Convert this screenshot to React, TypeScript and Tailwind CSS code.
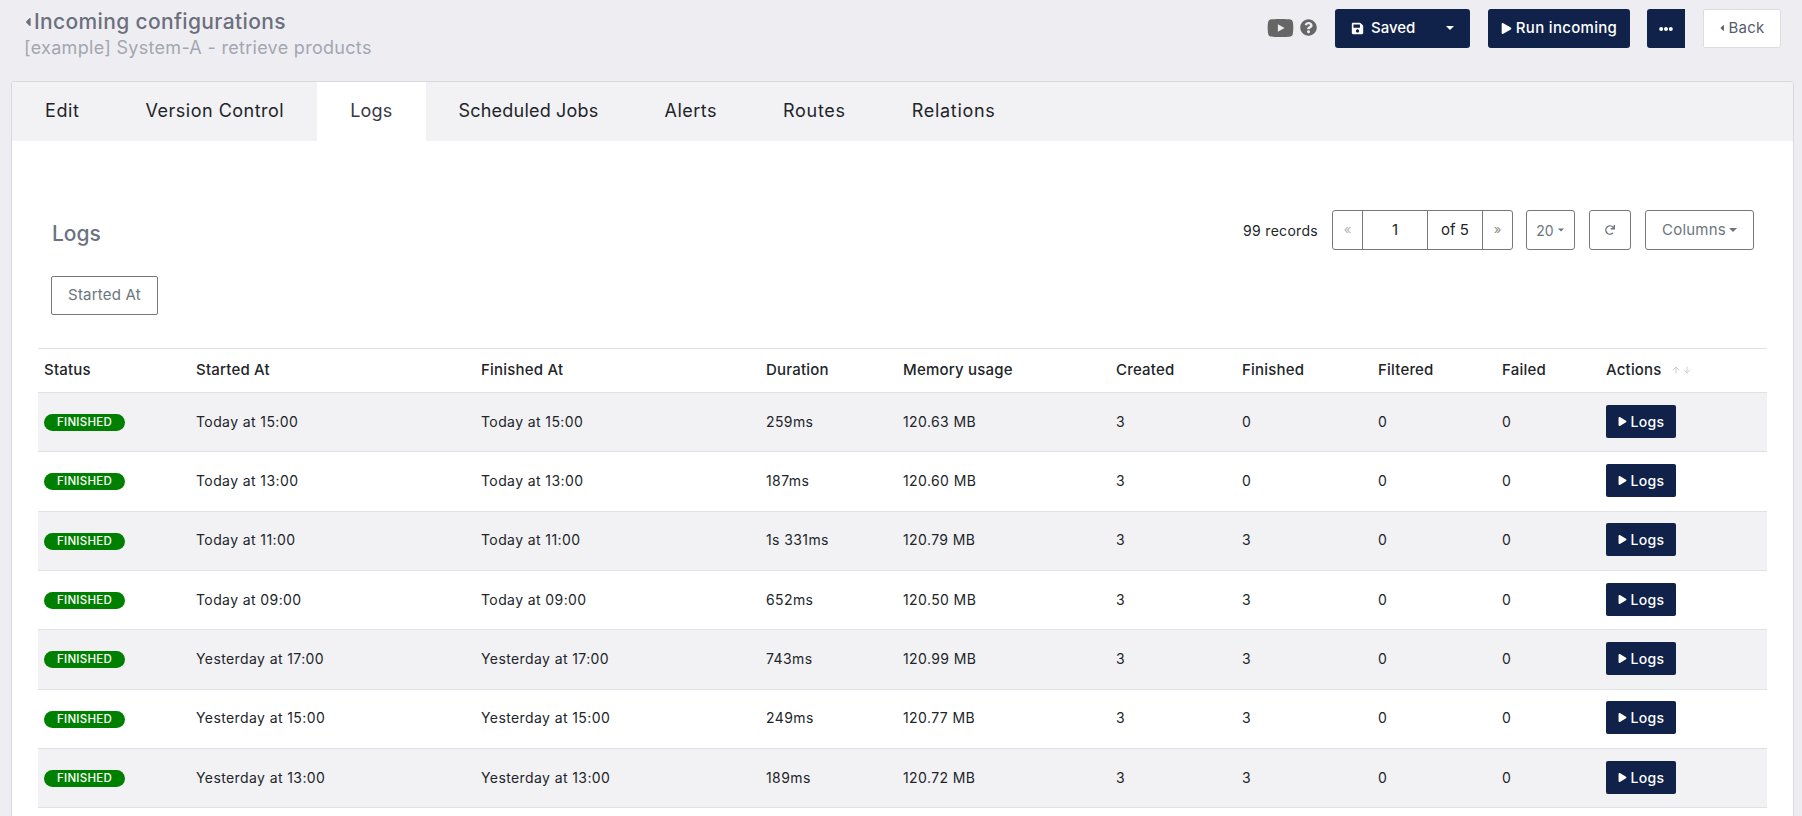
import { FaCaretLeft, FaEllipsisH, FaPlay, FaQuestionCircle, FaRedo, FaSave, FaYoutube } from 'react-icons/fa'
import { ArrowDown, ArrowUp } from 'lucide-react'

const logs = [
  { at: 'Today at 15:00', duration: '259ms', memory: '120.63 MB', finished: 0 },
  { at: 'Today at 13:00', duration: '187ms', memory: '120.60 MB', finished: 0 },
  { at: 'Today at 11:00', duration: '1s 331ms', memory: '120.79 MB', finished: 3 },
  { at: 'Today at 09:00', duration: '652ms', memory: '120.50 MB', finished: 3 },
  { at: 'Yesterday at 17:00', duration: '743ms', memory: '120.99 MB', finished: 3 },
  { at: 'Yesterday at 15:00', duration: '249ms', memory: '120.77 MB', finished: 3 },
  { at: 'Yesterday at 13:00', duration: '189ms', memory: '120.72 MB', finished: 3 },
]

const tabs = [
  { label: 'Edit', spacing: 'tracking-[0.6px]' },
  { label: 'Version Control', spacing: 'tracking-[0.5px]' },
  { label: 'Logs', spacing: 'tracking-[0.2px]' },
  { label: 'Scheduled Jobs', spacing: 'tracking-[0.2px]' },
  { label: 'Alerts', spacing: 'tracking-[0.5px]' },
  { label: 'Routes', spacing: 'tracking-[0.7px]' },
  { label: 'Relations', spacing: 'tracking-[0.7px]' },
]

const Caret = () => (
  <span className="inline-block border-x-[4px] border-t-[4px] border-x-transparent border-t-current" />
)

const App = () => {
  return (
    <div className="h-screen overflow-hidden bg-[#eeeef2] font-['Inter',sans-serif] text-[#212529]">
      {/* Header */}
      <div className="flex h-[81px] justify-between pl-[24px] pr-[21px]">
        <div className="pt-[8px]">
          <div className="flex h-[28px] items-center text-[21px] font-medium tracking-[0.35px] text-[#6c6f7d]">
            <FaCaretLeft className="mr-[2px] h-[14px] w-[8px]" />
            Incoming configurations
          </div>
          <div className="text-[18px] leading-[24px] tracking-[0.3px] text-[#a3a6b0]">
            [example] System-A - retrieve products
          </div>
        </div>
        <div className="flex items-start pt-[9px]">
          <div className="mr-[18px] flex h-[37px] items-center text-[#666]">
            <FaYoutube className="h-[30px] w-[27px]" />
            <FaQuestionCircle className="ml-[6px] h-[17px] w-[17px]" />
          </div>
          <button className="flex h-[39px] w-[135px] items-center rounded-[3px] bg-[#10224a] pb-[1px] pl-[16px] pr-[16px] text-[15px] font-medium text-white">
            <FaSave className="h-[13px] w-[13px]" />
            <span className="ml-[7px]">Saved</span>
            <span className="ml-auto flex"><Caret /></span>
          </button>
          <button className="ml-[18px] flex h-[39px] w-[142px] items-center justify-center rounded-[3px] bg-[#10224a] pb-[1px] text-[15px] font-medium tracking-[0.3px] text-white">
            <FaPlay className="mr-[4px] h-[11px] w-[11px]" />
            Run incoming
          </button>
          <button className="ml-[17px] flex h-[39px] w-[38px] items-center justify-center rounded-l-[3px] bg-[#10224a] text-white">
            <FaEllipsisH className="h-[14px] w-[14px]" />
          </button>
          <button className="ml-[18px] flex h-[39px] w-[78px] items-center justify-center rounded-[2px] border border-[#dcdce2] bg-white pb-[1px] text-[15px] tracking-[0.3px] text-[#565d6b]">
            <FaCaretLeft className="mr-[3px] h-[10px] w-[6px]" />
            Back
          </button>
        </div>
      </div>

      {/* Card */}
      <div className="ml-[11px] mr-[8px] h-[735px] rounded-t-[3px] border border-b-0 border-[#d8d8de] bg-white">
        <div className="flex h-[59px] bg-[#f2f1f4]">
          {tabs.map((tab) => (
            <div
              key={tab.label}
              className={`flex items-center px-[33px] pb-[3px] text-[18px] ${tab.spacing} ${tab.label === 'Logs' ? 'bg-white text-[#343a46]' : 'text-[#212529]'}`}
            >
              {tab.label}
            </div>
          ))}
        </div>

        <div className="px-[26px] pt-[69px]">
          <div className="flex h-[40px] items-center pl-[14px] pr-[13px]">
            <div className="pt-[7px] text-[21px] font-medium text-[#6c7280]">Logs</div>
            <div className="ml-auto text-[14px] tracking-[0.3px]">99 records</div>
            <div className="ml-[14px] flex h-[40px] rounded-[3px] border border-[#77777c] text-[15px]">
              <div className="flex w-[29px] items-center justify-center text-[13px] text-[#b5b5b5]">«</div>
              <div className="flex w-[65px] items-center justify-center border-l border-[#77777c]">1</div>
              <div className="flex w-[55px] items-center justify-center border-l border-[#77777c]">of 5</div>
              <div className="flex w-[30px] items-center justify-center border-l border-[#77777c] text-[13px] text-[#8c8c8c]">»</div>
            </div>
            <div className="ml-[13px] flex h-[40px] w-[49px] items-center justify-center gap-[3px] rounded-[3px] border border-[#77777c] text-[14px] text-[#6c757d]">
              20
              <span className="flex scale-75"><Caret /></span>
            </div>
            <div className="ml-[14px] flex h-[40px] w-[42px] items-center justify-center rounded-[3px] border border-[#77777c] text-[#6c757d]">
              <FaRedo className="h-[10px] w-[10px]" />
            </div>
            <div className="ml-[14px] flex h-[40px] w-[109px] items-center justify-center gap-[3px] rounded-[3px] border border-[#77777c] text-[15px] tracking-[0.2px] text-[#6c757d]">
              Columns
              <Caret />
            </div>
          </div>

          <button className="ml-[13px] mt-[26px] h-[39px] w-[107px] rounded-[2px] border border-[#77777c] pb-[1px] text-[15px] tracking-[0.2px] text-[#6c757d]">
            Started At
          </button>

          <div className="mt-[33px] border-t border-[#dee2e6] text-[14px] tracking-[0.4px]">
            <div className="grid h-[44px] grid-cols-[152px_285px_285px_137px_213px_126px_136px_124px_104px_1fr] items-center border-b border-[#dee2e6] px-[6px] pb-[1px] text-[15px] font-medium tracking-[0.2px]">
              <div>Status</div>
              <div>Started At</div>
              <div>Finished At</div>
              <div>Duration</div>
              <div>Memory usage</div>
              <div>Created</div>
              <div>Finished</div>
              <div>Filtered</div>
              <div>Failed</div>
              <div className="flex items-center">
                Actions
                <ArrowUp className="ml-[9px] h-[10px] w-[10px] text-[#c4c4c8]" />
                <ArrowDown className="ml-[1px] h-[10px] w-[10px] text-[#c4c4c8]" />
              </div>
            </div>
            {logs.map((log, i) => (
              <div
                key={log.at}
                className={`grid h-[59.33px] grid-cols-[152px_285px_285px_137px_213px_126px_136px_124px_104px_1fr] items-center border-b border-[#dee2e6] px-[6px] ${i % 2 === 0 ? 'bg-[#f2f1f4]' : 'bg-white'}`}
              >
                <div className="pt-[1px]">
                  <span className="flex h-[17px] w-[81px] items-center justify-center rounded-full bg-[#008000] text-[11.5px] font-medium tracking-[0.25px] text-white">
                    FINISHED
                  </span>
                </div>
                <div className="pb-[2px]">{log.at}</div>
                <div className="pb-[2px]">{log.at}</div>
                <div className="pb-[2px]">{log.duration}</div>
                <div className="pb-[2px]">{log.memory}</div>
                <div className="pb-[2px]">3</div>
                <div className="pb-[2px]">{log.finished}</div>
                <div className="pb-[2px]">0</div>
                <div className="pb-[2px]">0</div>
                <div className="pb-[2px]">
                  <button className="flex h-[33px] w-[70px] items-center justify-center rounded-[2px] bg-[#10224a] text-[14px] font-medium tracking-[0.3px] text-white">
                    <FaPlay className="mr-[4px] h-[9px] w-[9px]" />
                    Logs
                  </button>
                </div>
              </div>
            ))}
          </div>
        </div>
      </div>
    </div>
  )
}

export default App
